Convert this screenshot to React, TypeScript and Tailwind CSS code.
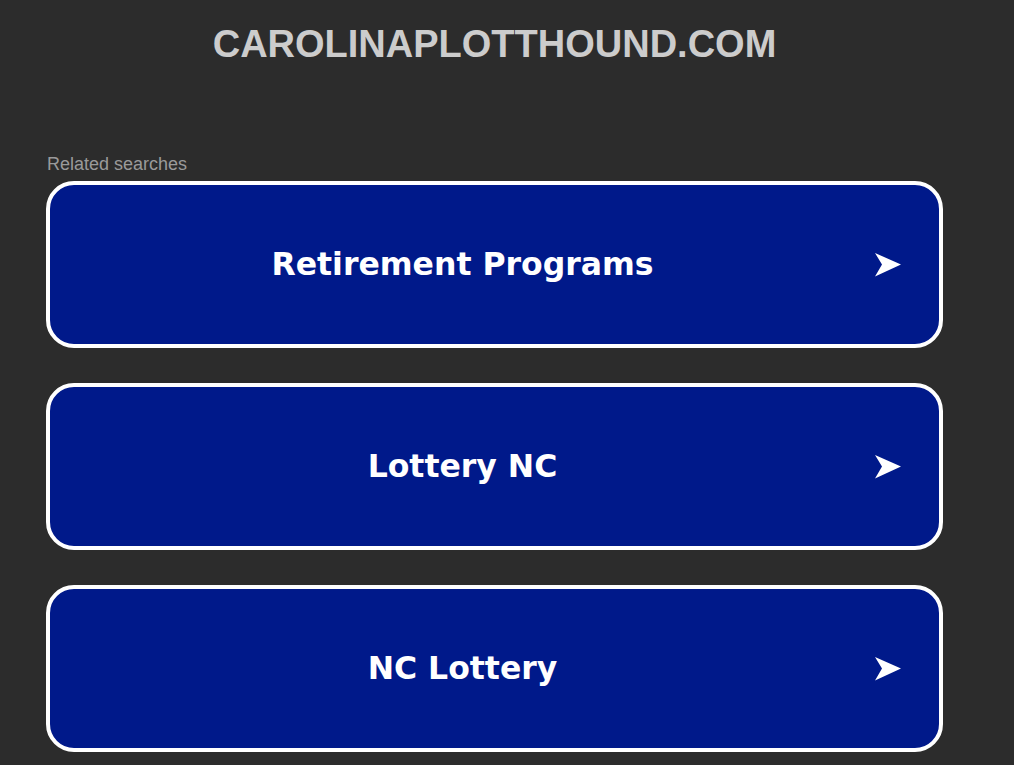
const searches = ['Retirement Programs', 'Lottery NC', 'NC Lottery'];

function Arrow() {
  return (
    <svg width="26" height="24" viewBox="0 0 26 24" className="shrink-0">
      <path d="M0 0 L26 11.5 L0 23.5 L7 11.5 Z" fill="#ffffff" />
    </svg>
  );
}

export default function App() {
  return (
    <div className="min-h-[765px] w-full bg-[#2c2c2c] font-['Liberation_Sans',Arial,sans-serif]">
      <div className="ml-[46px] w-[897px] pt-[25px]">
        <h1 className="text-center text-[38px] leading-[38px] font-bold text-[#cccccc]">
          CAROLINAPLOTTHOUND.COM
        </h1>

        <div className="mt-[91px] pl-px text-[18px] leading-[20px] text-[#9a9a9a]">Related searches</div>

        <div className="mt-[7px] flex flex-col gap-[35px]">
          {searches.map(s => (
            <a
              key={s}
              href="#"
              className="flex h-[167px] items-center rounded-[28px] border-[4px] border-white bg-[#00198a]"
            >
              <span className="flex-1 text-center font-['DejaVu_Sans',Verdana,sans-serif] text-[31.5px] font-bold text-white">
                {s}
              </span>
              <span className="mr-[38px] flex">
                <Arrow />
              </span>
            </a>
          ))}
        </div>
      </div>
    </div>
  );
}
